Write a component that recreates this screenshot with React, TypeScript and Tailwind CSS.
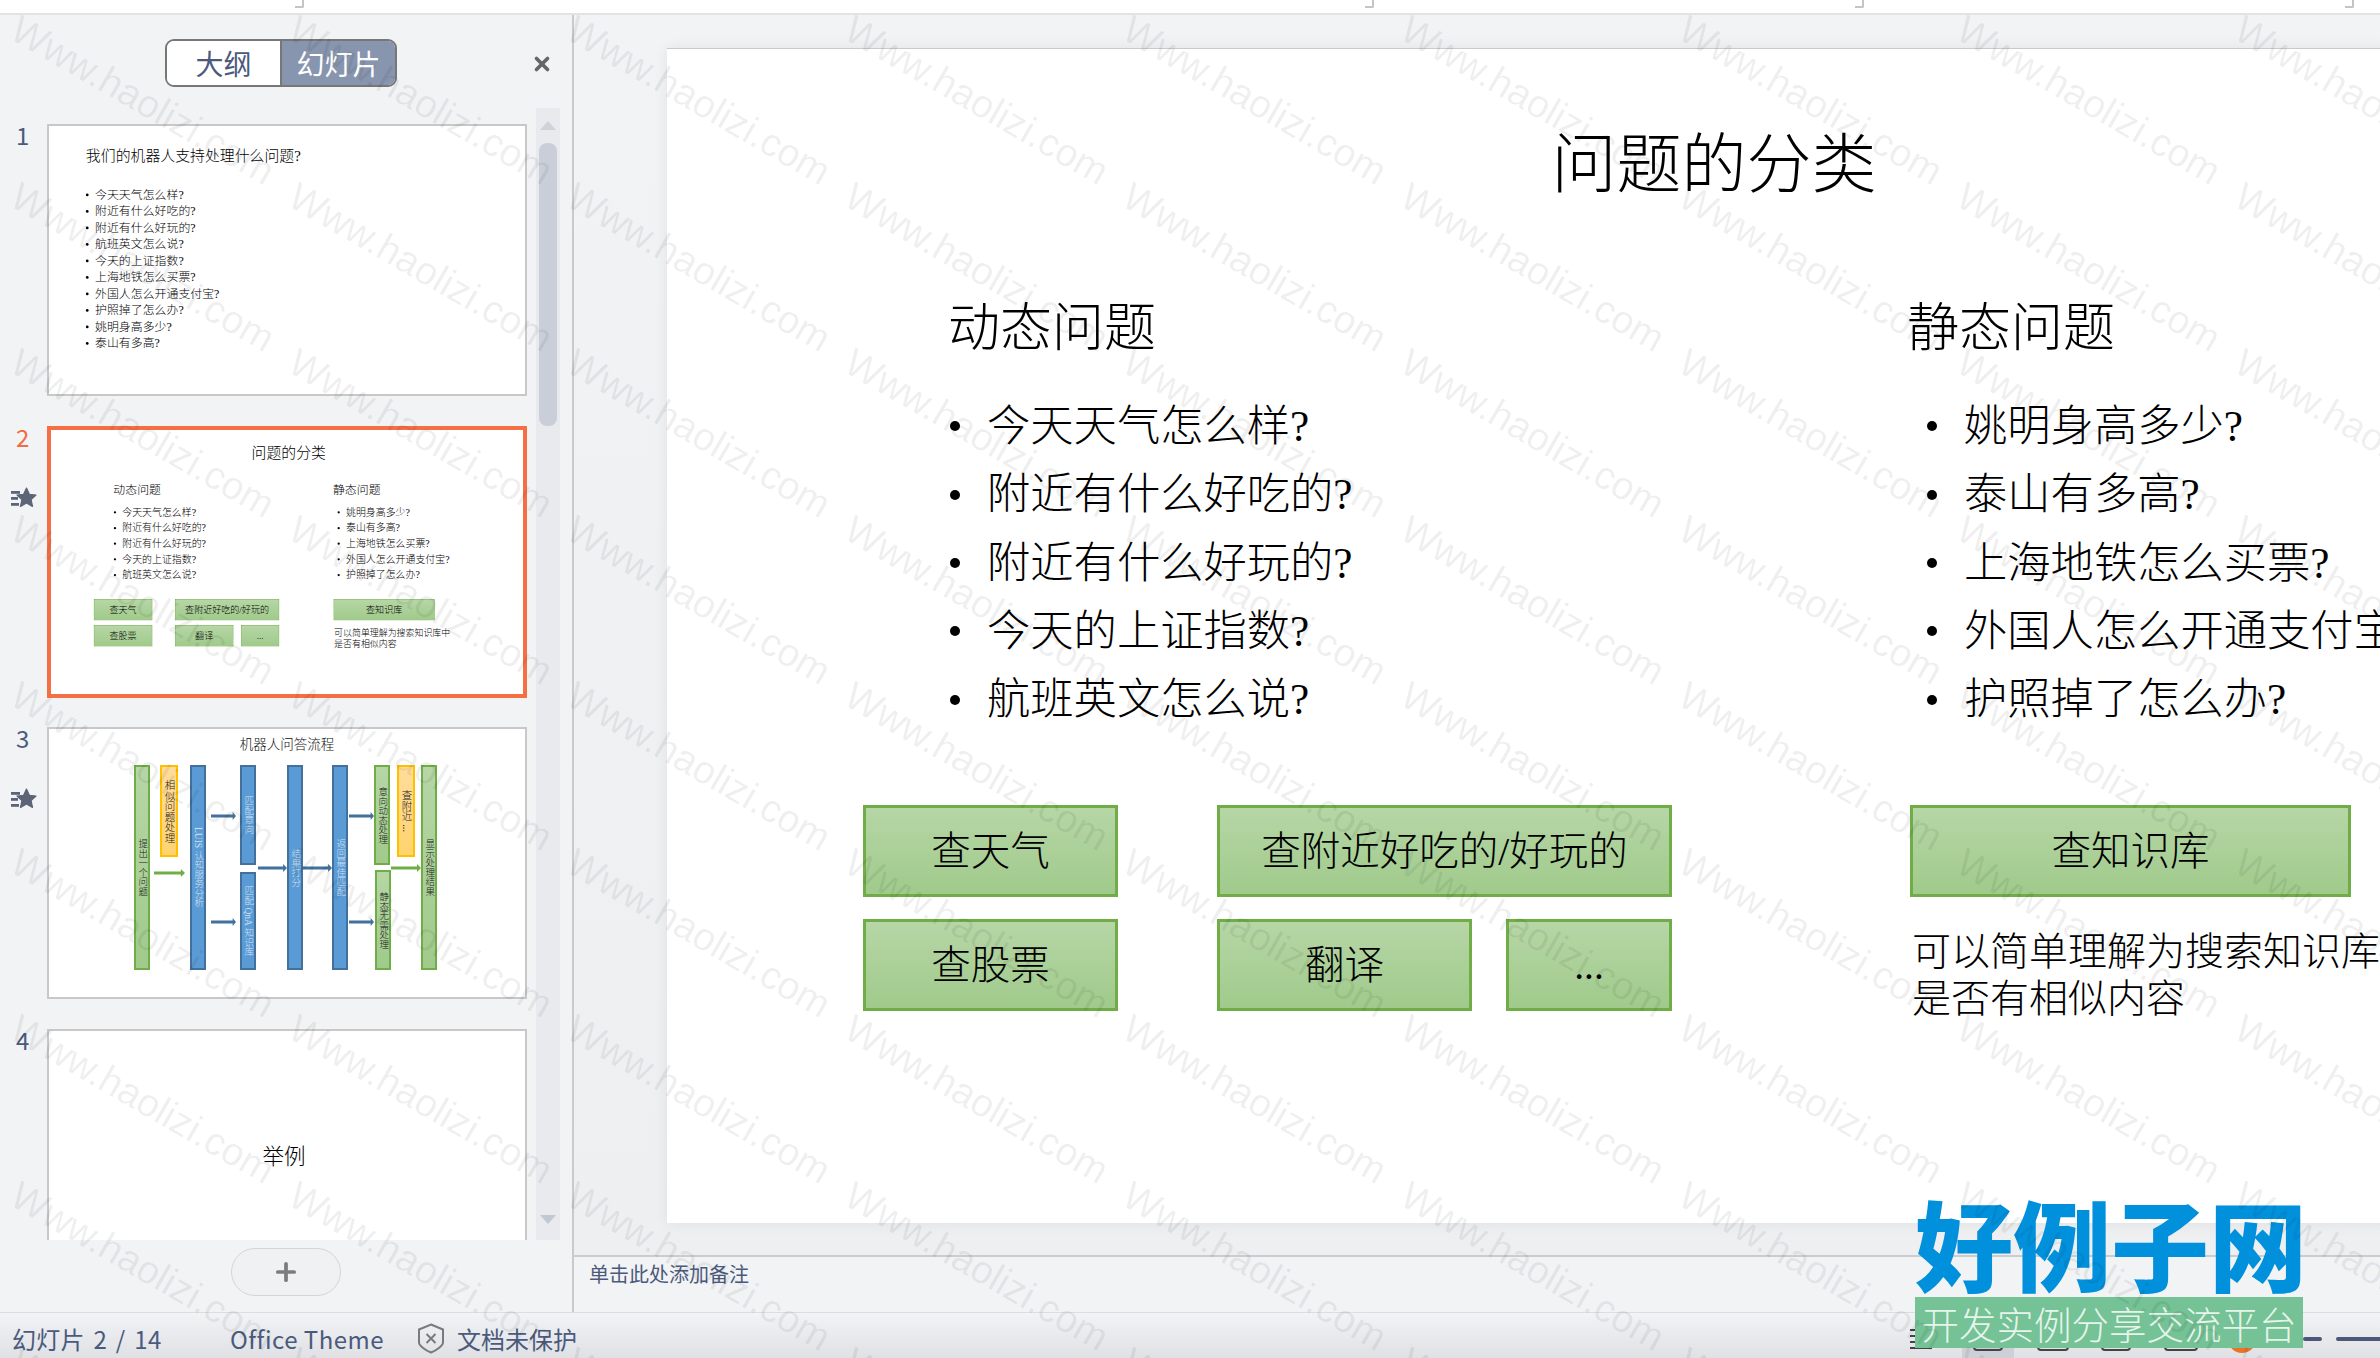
import { Plus, X } from "lucide-react";

const dynamicQs = ["今天天气怎么样?", "附近有什么好吃的?", "附近有什么好玩的?", "今天的上证指数?", "航班英文怎么说?"];
const staticQs = ["姚明身高多少?", "泰山有多高?", "上海地铁怎么买票?", "外国人怎么开通支付宝?", "护照掉了怎么办?"];
const allQs = [
  "今天天气怎么样?",
  "附近有什么好吃的?",
  "附近有什么好玩的?",
  "航班英文怎么说?",
  "今天的上证指数?",
  "上海地铁怎么买票?",
  "外国人怎么开通支付宝?",
  "护照掉了怎么办?",
  "姚明身高多少?",
  "泰山有多高?",
];

const GREEN_BOX =
  "flex items-center justify-center h-[92px] pt-[3px] border-[3px] border-[#70ad47] bg-gradient-to-b from-[#b6d6a6] to-[#a0ca8b] text-[39.5px] text-black";

function BulletList({ items, className }: { items: string[]; className: string }) {
  return (
    <ul className={className}>
      {items.map((q) => (
        <li key={q} className="flex items-center gap-[27px] h-[68.4px] text-[43.3px] whitespace-nowrap">
          <span className="w-[10px] h-[10px] rounded-full bg-black shrink-0" />
          {q}
        </li>
      ))}
    </ul>
  );
}

// the full size slide, the thumbnail re-uses it scaled down
function ClassifySlide() {
  return (
    <div className="w-[2094px] h-[1174px] bg-white text-black font-['Liberation_Serif','Noto_Sans_CJK_SC',serif] font-light">
      <h1 className="pt-[76px] text-center text-[65px] leading-[80px] font-light">问题的分类</h1>
      <div className="flex pl-[281px] pt-[94px]">
        <div className="w-[959px] shrink-0">
          <h2 className="text-[52px] leading-[60px] font-light">动态问题</h2>
          <BulletList items={dynamicQs} className="mt-[33px] pl-[2px]" />
        </div>
        <div>
          <h2 className="text-[52px] leading-[60px] font-light">静态问题</h2>
          <BulletList items={staticQs} className="mt-[33px] pl-[20px]" />
        </div>
      </div>
      <div className="flex pl-[196px] pt-[71px]">
        <div className="w-[255px] shrink-0 flex flex-col gap-[22px]">
          <div className={GREEN_BOX}>查天气</div>
          <div className={GREEN_BOX}>查股票</div>
        </div>
        <div className="w-[455px] ml-[99px] shrink-0 flex flex-col gap-[22px]">
          <div className={GREEN_BOX}>查附近好吃的/好玩的</div>
          <div className="flex justify-between">
            <div className={`${GREEN_BOX} w-[255px]`}>翻译</div>
            <div className={`${GREEN_BOX} w-[166px]`}>...</div>
          </div>
        </div>
        <div className="w-[441px] ml-[238px] shrink-0">
          <div className={GREEN_BOX}>查知识库</div>
          <p className="mt-[31px] ml-[2px] w-[520px] text-[39px] leading-[47px]">
            可以简单理解为搜索知识库中
            <br />
            是否有相似内容
          </p>
        </div>
      </div>
    </div>
  );
}

function IntroSlide() {
  return (
    <div className="w-[2094px] h-[1174px] bg-white text-black pl-[161px] pt-[100px] font-['Liberation_Serif','Noto_Sans_CJK_SC',serif] font-light">
      <h1 className="text-[65px] leading-[80px] font-light">我们的机器人支持处理什么问题?</h1>
      <ul className="mt-[94px]">
        {allQs.map((q) => (
          <li key={q} className="flex items-center gap-[28px] h-[72px] text-[52px] whitespace-nowrap">
            <span className="w-[12px] h-[12px] rounded-full bg-black shrink-0" />
            {q}
          </li>
        ))}
      </ul>
    </div>
  );
}

function Arrow({ className, color }: { className: string; color: string }) {
  return (
    <svg className={`absolute ${className}`} width="30" height="8" viewBox="0 0 30 8" preserveAspectRatio="none">
      <path d="M0 2.4h26V0l4 4-4 4V5.6H0z" fill={color} />
    </svg>
  );
}

function Bar({ className, text }: { className: string; text: string }) {
  return (
    <div className={`absolute flex items-center justify-center [writing-mode:vertical-rl] border-[2px] ${className}`}>
      {text}
    </div>
  );
}

const greenBar = "border-[#70ad47] bg-gradient-to-b from-[#b6d6a6] to-[#a0ca8b] text-[#1a1a1a] text-[9.5px] leading-[10.5px]";
const orangeBar = "border-[#ffc000] bg-gradient-to-b from-[#ffdc9a] to-[#ffd36e] text-[#1a1a1a] text-[10.5px] leading-[11px]";
const blueBar = "border-[#41719c] bg-[#5b9bd5] text-[#cfe0f2] text-[9.5px] leading-[10.5px]";

function FlowThumb() {
  return (
    <div className="absolute inset-0 bg-white font-light font-['Liberation_Serif','Noto_Sans_CJK_SC',serif]">
      <div className="pt-[9px] text-center text-[13.5px] leading-[18px] text-[#111]">机器人问答流程</div>
      <Bar className={`left-[87px] top-[38px] w-[16px] h-[205px] ${greenBar}`} text="提出一个问题" />
      <Bar className={`left-[113px] top-[38px] w-[18px] h-[92px] ${orangeBar}`} text="相似问题处理" />
      <Bar className={`left-[143px] top-[38px] w-[16px] h-[205px] ${blueBar}`} text="LUIS 认知服务分析" />
      <Bar className={`left-[193px] top-[38px] w-[16px] h-[100px] ${blueBar}`} text="匹配意向" />
      <Bar className={`left-[193px] top-[145px] w-[16px] h-[98px] ${blueBar}`} text="匹配 QnA 知识库" />
      <Bar className={`left-[240px] top-[38px] w-[16px] h-[205px] ${blueBar}`} text="结果打分" />
      <Bar className={`left-[285px] top-[38px] w-[16px] h-[205px] ${blueBar}`} text="返回最佳匹配" />
      <Bar className={`left-[327px] top-[38px] w-[16px] h-[100px] ${greenBar}`} text="意向动态处理" />
      <Bar className={`left-[350px] top-[38px] w-[18px] h-[92px] ${orangeBar}`} text="查附近 ..." />
      <Bar className={`left-[328px] top-[143px] w-[16px] h-[100px] ${greenBar}`} text="静态无需处理" />
      <Bar className={`left-[374px] top-[38px] w-[16px] h-[205px] ${greenBar}`} text="显示处理结果" />
      <Arrow className="left-[107px] top-[142px] w-[31px]" color="#70ad47" />
      <Arrow className="left-[164px] top-[85px] w-[25px]" color="#41719c" />
      <Arrow className="left-[164px] top-[191px] w-[25px]" color="#41719c" />
      <Arrow className="left-[211px] top-[137px] w-[29px]" color="#41719c" />
      <Arrow className="left-[256px] top-[137px] w-[29px]" color="#41719c" />
      <Arrow className="left-[302px] top-[85px] w-[25px]" color="#41719c" />
      <Arrow className="left-[302px] top-[191px] w-[25px]" color="#41719c" />
      <Arrow className="left-[344px] top-[137px] w-[30px]" color="#70ad47" />
    </div>
  );
}

function StarMark() {
  return (
    <svg width="26" height="22" viewBox="0 0 26 22" className="text-[#5c6577]" fill="currentColor">
      <rect x="0" y="4" width="9" height="2.8" />
      <rect x="0" y="10" width="7" height="2.800" />
      <rect x="0" y="16" width="8" height="2.800" />
      <path
        d="M15.500 1l2.900 6.300 6.600.7-4.900 4.600 1.400 6.800-6-3.500-6 3.500 1.400-6.800L6 8l6.600-.7z"
        stroke="currentColor"
        strokeWidth="1.200"
        strokeLinejoin="round"
      />
    </svg>
  );
}

function Thumb({
  n,
  active,
  star,
  children,
}: {
  n: number;
  active?: boolean;
  star?: boolean;
  children: React.ReactNode;
}) {
  return (
    <div className="flex shrink-0">
      <div className="w-[47px] shrink-0 pl-[11px]">
        <div
          className={`pl-[5px] -mt-[1px] text-[24px] leading-[24px] ${active ? "text-[#f26b43]" : "text-[#4b5a7c]"}`}
        >
          {n}
        </div>
        {star && (
          <div className="mt-[38px]">
            <StarMark />
          </div>
        )}
      </div>
      <div className="relative w-[480px] h-[272px] overflow-hidden bg-white">
        {children}
        <div
          className={
            active ? "absolute inset-0 border-[4px] border-[#f56f45]" : "absolute inset-0 border-2 border-[#c8c8c8]"
          }
        />
      </div>
    </div>
  );
}

function Sidebar() {
  return (
    <aside className="relative w-[574px] shrink-0 border-r-2 border-[#c9cacc] bg-[#f1f3f5] flex flex-col">
      <div className="flex items-center pt-[24px] pl-[165px] h-[72px]">
        <div className="flex w-[232px] h-[48px] rounded-[9px] border-[2px] border-[#777] overflow-hidden text-[28px]">
          <div className="w-[113px] flex items-center justify-center bg-white text-[#4b5a7c]">大纲</div>
          <div className="flex-1 flex items-center justify-center border-l-2 border-[#777] bg-[#8795ae] text-white">
            幻灯片
          </div>
        </div>
        <X size={22} strokeWidth={4} className="ml-[134px] mt-[2px] text-[#666]" />
      </div>
      <div className="flex mt-[21px] h-[1132px]">
        <div className="w-[536px] shrink-0 h-full overflow-hidden pt-[16px] flex flex-col gap-[29.6px]">
          <Thumb n={1}>
            <div className="ml-[2px] scale-[0.229] origin-top-left">
              <IntroSlide />
            </div>
          </Thumb>
          <Thumb n={2} active star>
            <div className="ml-[2px] scale-[0.229] origin-top-left">
              <ClassifySlide />
            </div>
          </Thumb>
          <Thumb n={3} star>
            <FlowThumb />
          </Thumb>
          <Thumb n={4}>
            <div className="h-full flex items-center justify-center pb-[16px] pr-[6px] text-[21.5px] text-black font-['Liberation_Serif','Noto_Sans_CJK_SC',serif] font-light">
              举例
            </div>
          </Thumb>
        </div>
        <div className="w-[24px] shrink-0 bg-[#e8eaed] flex flex-col items-center pt-[13px]">
          <div className="w-0 h-0 border-x-[8px] border-x-transparent border-b-[9px] border-b-[#cdd2db]" />
          <div className="w-[18px] h-[283px] mt-[13px] rounded-[8px] bg-[#c9ced8]" />
          <div className="mt-auto mb-[16px] w-0 h-0 border-x-[8px] border-x-transparent border-t-[9px] border-t-[#c1c8d4]" />
        </div>
      </div>
      <div className="flex-1 flex items-start pt-[8px] pl-[231px]">
        <div className="flex items-center justify-center w-[110px] h-[48px] rounded-[24px] border border-[#d4d5d7] bg-[#f0f1f2]">
          <Plus size={28} strokeWidth={3.2} className="text-[#7c7c7c]" />
        </div>
      </div>
    </aside>
  );
}

function Watermarks() {
  const cells = Array.from({ length: 90 }, (_, i) => i);
  return (
    <div className="absolute inset-0 overflow-hidden pointer-events-none">
      <div className="grid grid-cols-[repeat(9,278px)] auto-rows-[166.5px] w-max">
        {cells.map((i) => (
          <div key={i} className="relative">
            <span className="absolute left-[24px] top-[9px] origin-top-left rotate-[30deg] whitespace-nowrap text-[39px] leading-none text-black/[0.07] font-['Liberation_Sans',sans-serif]">
              Www.haolizi.com
            </span>
          </div>
        ))}
      </div>
    </div>
  );
}

function StatusBar() {
  return (
    <footer className="h-[46px] shrink-0 flex items-center border-t border-[#dcdddf] bg-gradient-to-b from-[#f1f3f5] to-[#dfe1e5] text-[24px] text-[#4b5a7c] pt-[6px]">
      <span className="ml-[12px] w-[218px] whitespace-nowrap [word-spacing:3px] tracking-[0.3px]">幻灯片 2 / 14</span>
      <span className="w-[187px] whitespace-nowrap tracking-[0.5px]">Office Theme</span>
      <svg width="28" height="31" viewBox="0 0 28 31" fill="none" stroke="#7a7a7a" strokeWidth="2">
        <path d="M14 1.500l12 5v13c0 3-6 7.500-12 10-6-2.500-12-7-12-10v-13z" />
        <path d="M9.500 11l9 9M18.500 11l-9 9" />
      </svg>
      <span className="ml-[12px] whitespace-nowrap">文档未保护</span>
      <div className="ml-auto flex items-center h-full">
        <div className="flex flex-col gap-[4px] w-[22px] mr-[30px]">
          <span className="h-[2px] bg-[#444]" />
          <span className="h-[2px] bg-[#444]" />
          <span className="h-[2px] bg-[#444]" />
          <span className="h-[2px] bg-[#444]" />
        </div>
        <div className="w-[52px] h-full bg-[#cdd0d6] flex items-center justify-center">
          <span className="w-[30px] h-[24px] rounded-[4px] border-2 border-[#444]" />
        </div>
        <span className="ml-[23px] w-[32px] h-[24px] rounded-[4px] border-2 border-[#444]" />
        <span className="ml-[32px] w-[30px] h-[24px] rounded-[4px] border-2 border-[#444]" />
        <span className="ml-[33px] w-[34px] h-[24px] rounded-[4px] border-2 border-[#444]" />
        <span className="ml-[30px] w-[28px] h-[28px] rounded-full bg-[#e8742a]" />
        <span className="ml-[47px] w-[19px] h-[4px] rounded-full bg-[#4d5878]" />
        <span className="ml-[14px] w-[44px] h-[4px] rounded-l-full bg-[#4d5878]" />
      </div>
    </footer>
  );
}

export default function App() {
  return (
    <div className="relative w-[2380px] h-[1358px] overflow-hidden flex flex-col bg-[#f1f3f5] font-['Noto_Sans_CJK_SC','Noto_Sans',sans-serif]">
      <div className="h-[15px] shrink-0 flex bg-white border-b-2 border-[#e2e3e4]">
        <span className="ml-[295px] w-[9px] h-[8px] border-r-2 border-b-2 border-[#c4c4c4] rounded-br-[2px]" />
        <span className="ml-[1061px] w-[9px] h-[8px] border-r-2 border-b-2 border-[#c4c4c4] rounded-br-[2px]" />
        <span className="ml-[481px] w-[9px] h-[8px] border-r-2 border-b-2 border-[#c4c4c4] rounded-br-[2px]" />
        <span className="ml-[481px] w-[9px] h-[8px] border-r-2 border-b-2 border-[#c4c4c4] rounded-br-[2px]" />
      </div>
      <div className="flex-1 flex min-h-0">
        <Sidebar />
        <section className="flex-1 min-w-0 flex flex-col">
          <div className="flex-1 min-h-0 overflow-hidden pt-[33px] pl-[93px] bg-gradient-to-b from-[#f1f3f5] to-[#eeeff1]">
            <div className="w-[2094px] border-t border-[#c9cacc] shadow-[0_0_14px_rgba(0,0,0,0.07)]">
              <ClassifySlide />
            </div>
          </div>
          <div className="h-[57px] shrink-0 border-t-2 border-[#cbccce] pl-[15px] pt-[3px] text-[20px] leading-[28px] text-[#4b5a7c]">
            单击此处添加备注
          </div>
        </section>
      </div>
      <StatusBar />

      {/* site logo stamped over the screenshot */}
      <div className="absolute left-[1915px] top-[1185px] w-[388px] flex flex-col items-stretch">
        <div className="text-center text-[98px] leading-[112px] font-black text-[#0090dc] whitespace-nowrap">
          好例子网
        </div>
        <div className="h-[51px] flex items-center justify-center bg-[#74c295] text-[37.5px] leading-none font-light text-[#e6f4ec] whitespace-nowrap">
          开发实例分享交流平台
        </div>
      </div>
      <Watermarks />
    </div>
  );
}
